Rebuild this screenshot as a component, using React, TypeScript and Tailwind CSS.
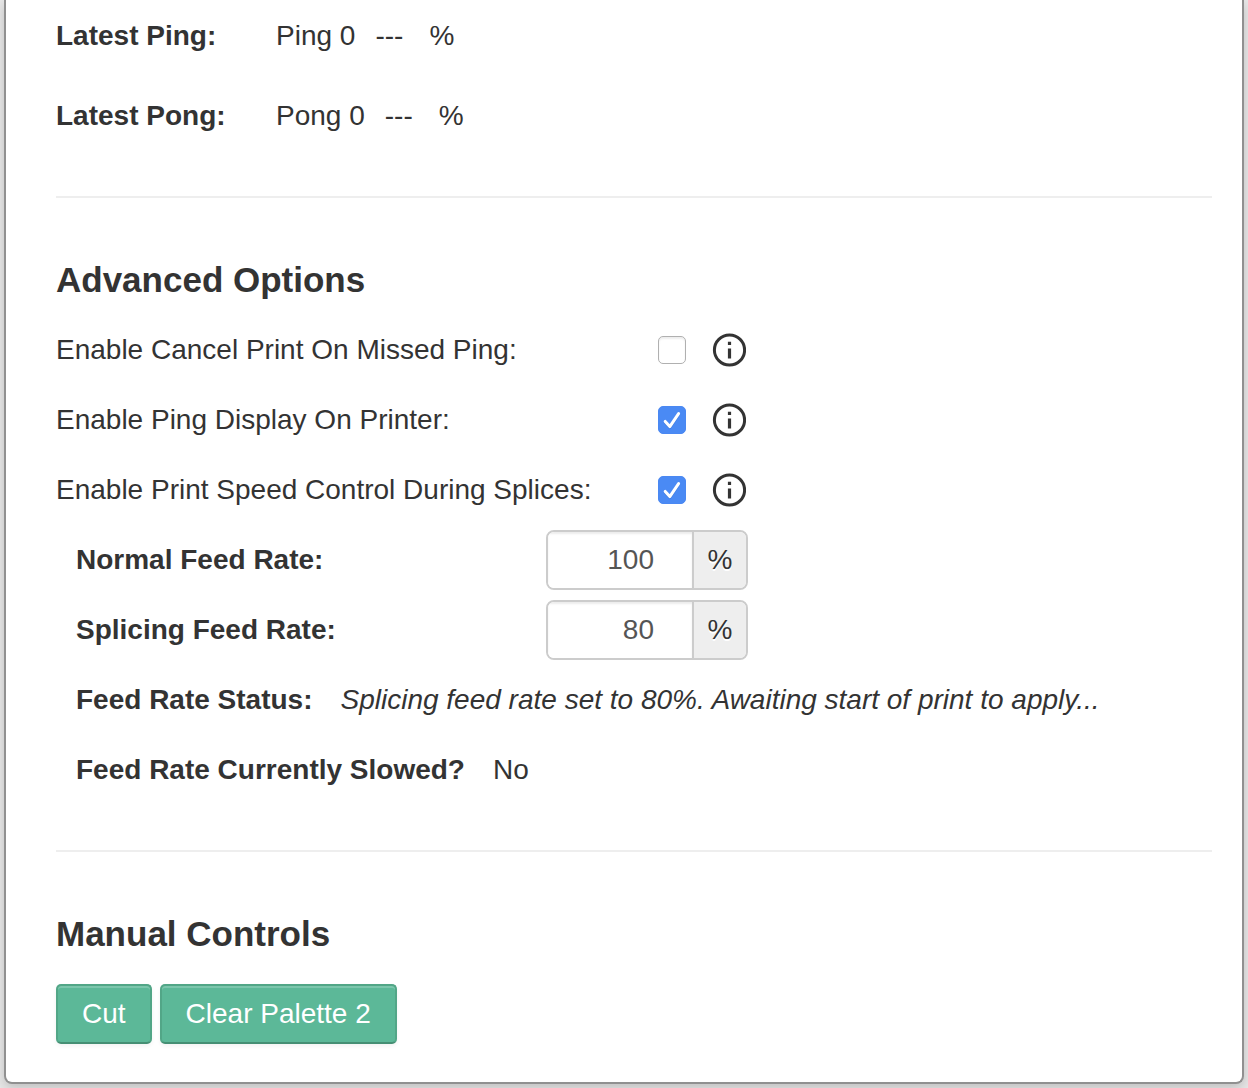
import { useState, type ReactNode } from "react";

function Reading({ label, name }: { label: string; name: string }) {
  return (
    <div className="flex h-10 items-center">
      <dt className="w-[220px] font-bold">{label}</dt>
      <dd className="flex">
        <span className="mr-5">{name} 0</span>
        <span className="w-[54px]">---</span>
        <span>%</span>
      </dd>
    </div>
  );
}

function InfoIcon() {
  return (
    <svg viewBox="0 0 34 34" className="size-[34px]" aria-hidden="true">
      <circle cx="17.5" cy="17" r="15.1" fill="none" stroke="#333" strokeWidth="3" />
      <path d="M15.9 8.7h3.2v3.4h-3.2zM15.9 15.6h3.2v9.8h-3.2z" fill="#333" />
    </svg>
  );
}

function ToggleRow({ id, label, initial }: { id: string; label: string; initial: boolean }) {
  const [on, setOn] = useState(initial);
  return (
    <div className="flex h-[70px] items-center">
      <label htmlFor={id} className="w-[602px]">
        {label}
      </label>
      <span className="relative size-7">
        <input
          id={id}
          type="checkbox"
          checked={on}
          onChange={(e) => setOn(e.target.checked)}
          className="block size-7 appearance-none rounded-[5px] border border-[#b0b0b0] bg-white shadow-[inset_0_2px_2px_#eeeeee] checked:border-[#4a88f2] checked:bg-[#4a8af4] checked:shadow-none"
        />
        {on && (
          <svg viewBox="0 0 28 28" className="pointer-events-none absolute inset-0" aria-hidden="true">
            <path d="M7.2 16.4 11.8 21.6 20.6 8.6" fill="none" stroke="#2f66c4" strokeOpacity=".35" strokeWidth="3" strokeLinecap="round" strokeLinejoin="round" />
            <path d="M7.2 15.4 11.8 20.6 20.6 7.6" fill="none" stroke="#fff" strokeWidth="3" strokeLinecap="round" strokeLinejoin="round" />
          </svg>
        )}
      </span>
      <button type="button" aria-label={`About: ${label}`} className="ml-[26px] rounded-full">
        <InfoIcon />
      </button>
    </div>
  );
}

function RateRow({ id, label, initial }: { id: string; label: string; initial: string }) {
  const [value, setValue] = useState(initial);
  return (
    <div className="flex h-[70px] items-center">
      <label htmlFor={id} className="w-[470px] font-bold">
        {label}
      </label>
      <div className="flex h-[60px] w-[202px] overflow-hidden rounded-lg border-2 border-[#cccccc]">
        <input
          id={id}
          type="text"
          inputMode="numeric"
          value={value}
          onChange={(e) => setValue(e.target.value)}
          className="min-w-0 flex-1 bg-white pr-[38px] text-right text-[#555555] shadow-[inset_0_2px_2px_rgba(0,0,0,0.075)] outline-none"
        />
        <span className="flex w-[54px] items-center justify-center border-l-2 border-[#cccccc] bg-[#eeeeee] [text-shadow:0_2px_0_#ffffff]">
          %
        </span>
      </div>
    </div>
  );
}

function ActionButton({ children }: { children: ReactNode }) {
  return (
    <button
      type="button"
      className="h-[60px] rounded-[5px] border-2 border-[#52a687] border-b-[#468f74] bg-[#5cb898] px-6 text-white shadow-[inset_0_2px_0_rgba(255,255,255,0.2),0_2px_4px_rgba(0,0,0,0.05)]"
    >
      {children}
    </button>
  );
}

function Heading({ children }: { children: ReactNode }) {
  return <h2 className="mt-[47px] flex h-[70px] items-center text-[35px] font-bold">{children}</h2>;
}

export default function App() {
  return (
    <div className="overflow-hidden bg-[#e8e8e8] px-1 pb-1 font-['Liberation_Sans',Arial,sans-serif] text-[28px] leading-10 text-[#333333]">
      <main className="rounded-b-lg border-2 border-t-0 border-[#909090] bg-white pt-4 pr-[30px] pb-[38px] pl-[50px] shadow-[0_4px_12px_rgba(0,0,0,0.18)]">
        <dl className="flex flex-col gap-10">
          <Reading label="Latest Ping:" name="Ping" />
          <Reading label="Latest Pong:" name="Pong" />
        </dl>
        <hr className="mt-[60px] border-t-2 border-[#eeeeee]" />
        <section>
          <Heading>Advanced Options</Heading>
          <ToggleRow id="cancel-print" label="Enable Cancel Print On Missed Ping:" initial={false} />
          <ToggleRow id="ping-display" label="Enable Ping Display On Printer:" initial={true} />
          <ToggleRow id="speed-control" label="Enable Print Speed Control During Splices:" initial={true} />
          <div className="pl-5">
            <RateRow id="normal-rate" label="Normal Feed Rate:" initial="100" />
            <RateRow id="splicing-rate" label="Splicing Feed Rate:" initial="80" />
            <p className="flex h-[70px] items-center gap-7">
              <strong>Feed Rate Status:</strong>
              <em>Splicing feed rate set to 80%. Awaiting start of print to apply...</em>
            </p>
            <p className="flex h-[70px] items-center gap-7">
              <strong>Feed Rate Currently Slowed?</strong>
              <span>No</span>
            </p>
          </div>
        </section>
        <hr className="mt-[45px] border-t-2 border-[#eeeeee]" />
        <section>
          <Heading>Manual Controls</Heading>
          <div className="mt-[15px] flex gap-2">
            <ActionButton>Cut</ActionButton>
            <ActionButton>Clear Palette 2</ActionButton>
          </div>
        </section>
      </main>
    </div>
  );
}
